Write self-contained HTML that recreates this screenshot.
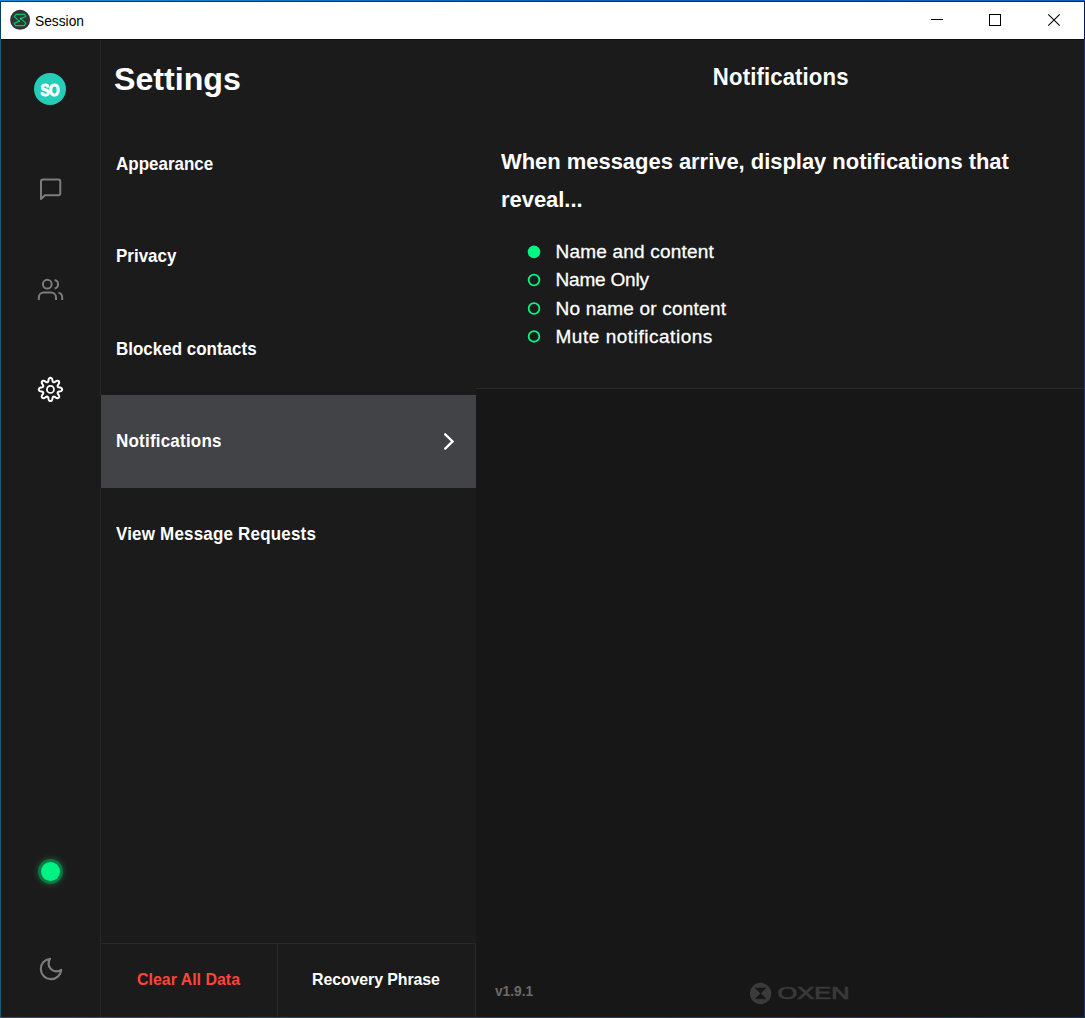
<!DOCTYPE html>
<html lang="en">
<head>
<meta charset="utf-8">
<title>Session</title>
<style>
*{box-sizing:border-box;margin:0;padding:0}
html,body{width:1085px;height:1018px;overflow:hidden;background:#1b1b1b}
body{position:relative;font-family:"Liberation Sans",sans-serif;color:#fff;-webkit-font-smoothing:antialiased}
.abs{position:absolute}
#titlebar{left:1px;top:2px;width:1083px;height:37px;background:#fff}
#bt{left:0;top:0;width:1085px;height:1px;background:linear-gradient(90deg,#178bd6,#115cb8 55%,#1060c0)}
#bt2{left:0;top:1px;width:1085px;height:1px;background:linear-gradient(90deg,#0a3a66,#0a2a5e)}
#bl{left:0;top:1px;width:1px;height:1017px;background:linear-gradient(#064060 38px,#1d5a7c 38px)}
#br{left:1084px;top:1px;width:1px;height:1017px;background:linear-gradient(#00184e 38px,#1a3564 38px)}
#tl{left:1px;top:39px;width:1083px;height:1px;background:#0f0f0f}
#bb{left:0;top:1017px;width:1085px;height:1px;background:linear-gradient(90deg,#1d5878,#1a3564)}
#ttext{left:35.2px;top:12.3px;font-size:15.4px;line-height:18px;color:#000;white-space:nowrap;transform:scaleX(.895);transform-origin:0 50%}
#sidebar{left:1px;top:39px;width:100px;height:978px;background:#1b1b1b;border-right:1px solid #292929}
#left{left:101px;top:39px;width:375px;height:978px;background:#1b1b1b}
#main{left:476px;top:39px;width:608px;height:978px;background:#171717}
#maintop{left:476px;top:39px;width:608px;height:349px;background:#1b1b1b}
#sep{left:476px;top:388px;width:608px;height:1px;background:#2a2a2a}
.t{white-space:nowrap;line-height:1}
#settings{left:113.5px;top:65.3px;font-size:30.7px;font-weight:bold;transform:scaleX(1.048);transform-origin:0 50%}
.item{left:116px;font-size:17.7px;font-weight:bold;transform:scaleX(.96);transform-origin:0 50%}
#sel{left:101px;top:395px;width:375px;height:93px;background:#414347;box-shadow:-1px 0 0 #1b1b1b}
#mtitle{left:476px;top:66.2px;width:609.5px;text-align:center;font-size:23.1px;font-weight:bold;letter-spacing:.12px;transform:scaleX(.96)}
#head{left:501.3px;top:142px;width:585px;font-size:22.9px;font-weight:bold;line-height:38px;white-space:normal;letter-spacing:-.03px;transform:scaleX(.96);transform-origin:0 50%}
.opt{left:555.5px;font-size:19px;-webkit-text-stroke:.3px #fff}
#btns{left:101px;top:943px;width:375px;height:74px;border-top:1px solid #292929;border-right:1px solid #292929}
#bdiv{left:276.5px;top:943px;width:1px;height:74px;background:#292929}
.btn{font-size:16.6px;font-weight:bold;top:971.6px;transform:scaleX(.96);transform-origin:0 50%}
#ver{left:494.9px;top:985px;font-size:13.8px;font-weight:bold;color:#6a6a6a}
#avatar{left:34.3px;top:73.2px;width:32.2px;height:32.2px;border-radius:50%;background:#25cdb7}
#avtext{left:30.4px;top:83.1px;width:40px;text-align:center;font-size:15.6px;font-weight:bold;letter-spacing:-.4px;transform:scaleX(.87);text-indent:-.4px;-webkit-text-stroke:.9px #fff}
#dot{left:41px;top:861.8px;width:19px;height:19px;border-radius:50%;background:#00f283;box-shadow:0 0 0 3px rgba(0,247,130,.3),0 0 4px 5px rgba(0,247,130,.18)}
</style>
</head>
<body>
<div class="abs" id="sidebar"></div>
<div class="abs" id="left"></div>
<div class="abs" id="main"></div>
<div class="abs" id="maintop"></div>
<div class="abs" id="sep"></div>

<div class="abs" id="titlebar"></div>
<div class="abs" id="tl"></div>
<div class="abs" id="bt"></div><div class="abs" id="bt2"></div>
<div class="abs" id="bl"></div><div class="abs" id="br"></div><div class="abs" id="bb"></div>
<div class="abs t" id="ttext">Session</div>

<div class="abs" id="avatar"></div>
<div class="abs t" id="avtext">SO</div>

<div class="abs t" id="settings">Settings</div>
<div class="abs" id="sel"></div>
<div class="abs t item" style="top:156px">Appearance</div>
<div class="abs t item" style="top:248.3px">Privacy</div>
<div class="abs t item" style="top:340.9px">Blocked contacts</div>
<div class="abs t item" style="top:433px;letter-spacing:.23px">Notifications</div>
<div class="abs t item" style="top:525.9px;letter-spacing:.2px">View Message Requests</div>

<div class="abs t" id="mtitle">Notifications</div>
<div class="abs" id="head">When messages arrive, display notifications that reveal...</div>

<div class="abs t opt" style="top:242px;letter-spacing:.2px">Name and content</div>
<div class="abs t opt" style="top:270.2px;letter-spacing:-.2px">Name Only</div>
<div class="abs t opt" style="top:298.5px;letter-spacing:.21px">No name or content</div>
<div class="abs t opt" style="top:326.7px;letter-spacing:.53px">Mute notifications</div>

<div class="abs" id="btns"></div>
<div class="abs" id="bdiv"></div>
<div class="abs t btn" style="left:137px;color:#ff453a">Clear All Data</div>
<div class="abs t btn" style="left:312px;letter-spacing:-.1px">Recovery Phrase</div>
<div class="abs t" id="ver">v1.9.1</div>

<div class="abs" id="dot"></div>
<svg class="abs" id="icons" style="left:0;top:0" width="1085" height="1018" viewBox="0 0 1085 1018">
  <!-- app logo -->
  <circle cx="20.1" cy="19.85" r="10" fill="#343434"/>
  <path d="M14.25 16.5L16 14.4H24.5L25.9 16.5 20.5 18.6 25.9 23.1 24.3 25.6H15.5L14.1 23.4 19.3 21.3Z" fill="none" stroke="#00c56f" stroke-width="1.15" stroke-linejoin="round"/>
  <circle cx="20.5" cy="18.6" r=".8" fill="#14f08a"/><circle cx="19.3" cy="21.3" r=".8" fill="#14f08a"/>
  <!-- window controls -->
  <rect x="931" y="19" width="12" height="1" fill="#000"/>
  <rect x="989.5" y="14.5" width="11" height="11" fill="none" stroke="#000" stroke-width="1"/>
  <path d="M1048.3 14.3l11.4 11.4M1059.7 14.3l-11.4 11.4" stroke="#000" stroke-width="1.1" fill="none"/>
  <!-- radios -->
  <circle cx="534" cy="251.9" r="6.3" fill="#00f782"/>
  <g fill="none" stroke="#00f782" stroke-width="1.8">
    <circle cx="534" cy="280" r="5.35"/>
    <circle cx="534" cy="308.5" r="5.35"/>
    <circle cx="534" cy="336.4" r="5.35"/>
  </g>
  <!-- chat -->
  <path d="M41 199V181.4a2 2 0 0 1 2-2H58.3a2 2 0 0 1 2 2V193.2a2 2 0 0 1-2 2H45L41 199Z" fill="none" stroke="#7d7d7d" stroke-width="2" stroke-linejoin="round"/>
  <!-- users -->
  <g fill="none" stroke="#7d7d7d" stroke-width="2">
    <circle cx="47.3" cy="284.2" r="4.4"/>
    <path d="M38.8 300V297.4a5 5 0 0 1 5-5H51a5 5 0 0 1 5 5V300"/>
    <path d="M54.6 279.9a4.4 4.4 0 0 1 0 8.6"/>
    <path d="M58.5 292.6a5 5 0 0 1 3.7 4.8V300"/>
  </g>
  <!-- gear -->
  <path d="M50.5 377.8L50.9 377.8L51.3 378.1L51.8 378.4L52.1 379.0L52.4 379.9L52.5 380.8L52.7 381.4L52.9 381.8L53.2 382.1L53.4 382.2L53.7 382.3L54.1 382.3L54.6 382.1L55.1 381.9L55.9 381.3L56.7 380.9L57.3 380.7L57.9 380.8L58.3 380.9L58.7 381.2L59.0 381.6L59.1 382.0L59.2 382.6L59.0 383.2L58.6 384.0L58.0 384.8L57.8 385.3L57.6 385.8L57.6 386.2L57.7 386.5L57.8 386.7L58.1 387.0L58.5 387.2L59.1 387.4L60.0 387.5L60.9 387.8L61.5 388.1L61.8 388.6L62.1 389.0L62.2 389.4L62.1 389.9L61.8 390.3L61.5 390.8L60.9 391.1L60.0 391.4L59.1 391.5L58.5 391.7L58.1 391.9L57.8 392.2L57.7 392.4L57.6 392.7L57.6 393.1L57.8 393.6L58.0 394.1L58.6 394.9L59.0 395.7L59.2 396.3L59.1 396.9L59.0 397.3L58.7 397.7L58.3 398.0L57.9 398.1L57.3 398.2L56.7 398.0L55.9 397.6L55.1 397.0L54.6 396.8L54.1 396.6L53.7 396.6L53.4 396.7L53.2 396.8L52.9 397.1L52.7 397.5L52.5 398.1L52.4 399.0L52.1 399.9L51.8 400.5L51.3 400.8L50.9 401.1L50.5 401.1L50.0 401.1L49.6 400.8L49.1 400.5L48.8 399.9L48.5 399.0L48.4 398.1L48.2 397.5L48.0 397.1L47.7 396.8L47.5 396.7L47.2 396.6L46.8 396.6L46.3 396.8L45.8 397.0L45.0 397.6L44.2 398.0L43.6 398.2L43.0 398.1L42.6 398.0L42.2 397.7L41.9 397.3L41.8 396.9L41.7 396.3L41.9 395.7L42.3 394.9L42.9 394.1L43.1 393.6L43.3 393.1L43.3 392.7L43.2 392.4L43.1 392.2L42.8 391.9L42.4 391.7L41.8 391.5L40.9 391.4L40.0 391.1L39.4 390.8L39.1 390.3L38.8 389.9L38.8 389.4L38.8 389.0L39.1 388.6L39.4 388.1L40.0 387.8L40.9 387.5L41.8 387.4L42.4 387.2L42.8 387.0L43.1 386.7L43.2 386.5L43.3 386.2L43.3 385.8L43.1 385.3L42.9 384.8L42.3 384.0L41.9 383.2L41.7 382.6L41.8 382.0L41.9 381.6L42.2 381.2L42.6 380.9L43.0 380.8L43.6 380.7L44.2 380.9L45.0 381.3L45.8 381.9L46.3 382.1L46.8 382.3L47.2 382.3L47.5 382.2L47.7 382.1L48.0 381.8L48.2 381.4L48.4 380.8L48.5 379.9L48.8 379.0L49.1 378.4L49.6 378.1L50.0 377.8Z" fill="none" stroke="#fff" stroke-width="2" stroke-linejoin="round"/>
  <circle cx="50.45" cy="389.45" r="3.5" fill="none" stroke="#fff" stroke-width="1.8"/>
  <!-- moon -->
  <path transform="translate(37.32 955.3) scale(1.14)" d="M21 12.79A9 9 0 1 1 11.21 3 7 7 0 0 0 21 12.79z" fill="none" stroke="#7d7d7d" stroke-width="1.9" stroke-linejoin="round"/>
  <!-- chevron -->
  <path d="M445.2 434.3L452.6 441.45 445.2 448.6" fill="none" stroke="#fff" stroke-width="2.3" stroke-linecap="round"/>
  <!-- oxen -->
  <circle cx="760.6" cy="993.5" r="10.7" fill="#3b3b3b"/>
  <path d="M755.3 988H766L760.65 993.4ZM755.3 998.8H766L760.65 993.4Z" fill="#171717" stroke="#171717" stroke-width=".5" stroke-linejoin="round"/>
  <text x="777.6" y="999.2" font-family="'Liberation Sans',sans-serif" font-size="16.7" fill="#393939" stroke="#393939" stroke-width=".7" textLength="72" lengthAdjust="spacingAndGlyphs">OXEN</text>
</svg>
</body>
</html>
